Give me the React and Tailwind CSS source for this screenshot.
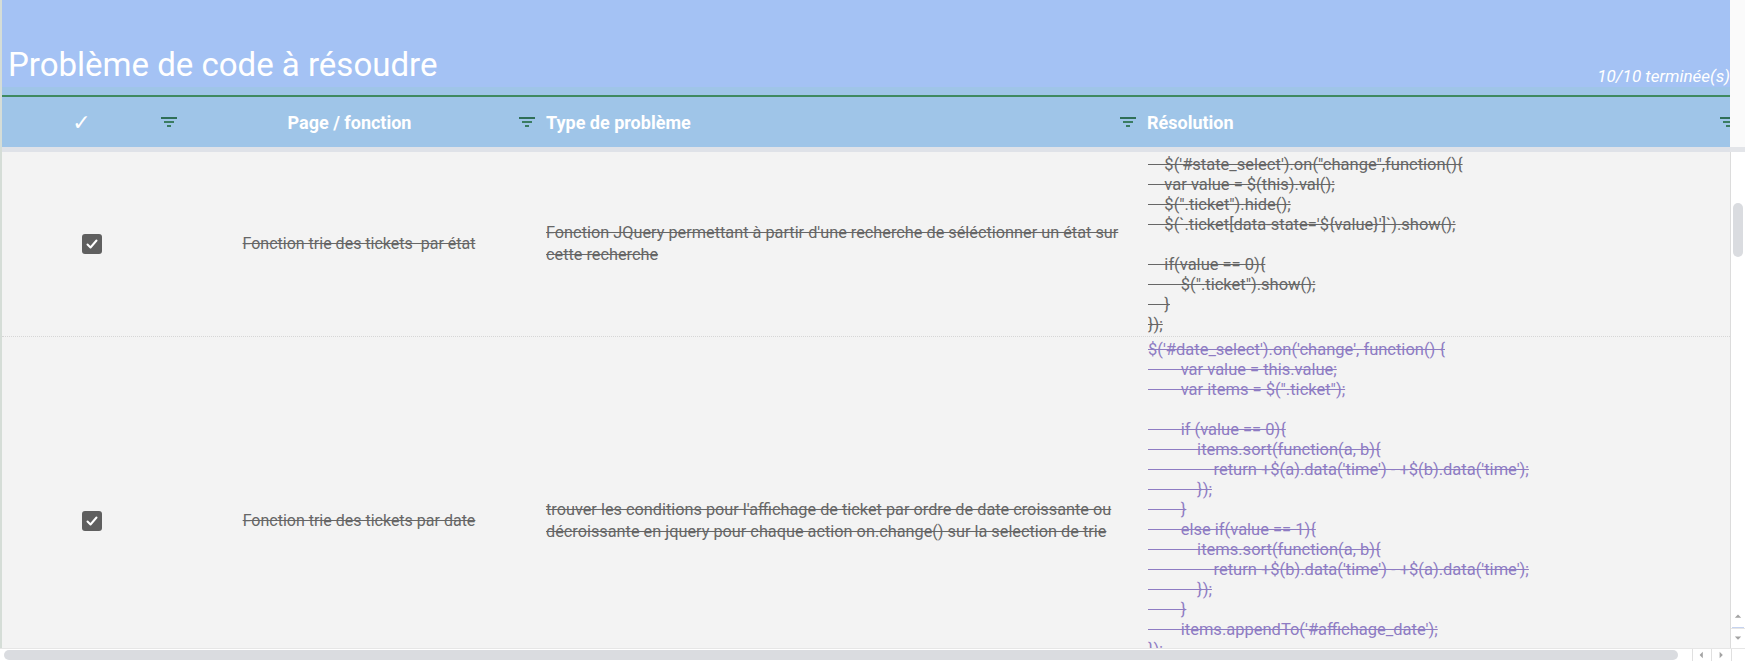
import React from 'react';

const ROWS = [
  {
    page: 'Fonction trie des tickets  par état',
    type: "Fonction JQuery permettant à partir d'une recherche de séléctionner un état sur cette recherche",
    color: 'text-[#666666]',
    pad: 'pb-[1px]',
    code: [
      "    $('#state_select').on(\"change\",function(){",
      '    var value = $(this).val();',
      '    $(".ticket").hide();',
      "    $(`.ticket[data-state='${value}']`).show();",
      '',
      '    if(value == 0){',
      '        $(".ticket").show();',
      '    }',
      '});',
    ],
  },
  {
    page: 'Fonction trie des tickets par date',
    type: "trouver les conditions pour l'affichage de ticket par ordre de date croissante ou décroissante en jquery pour chaque action on.change() sur la selection de trie",
    color: 'text-[#8e7cc3]',
    pad: 'pb-[44px]',
    code: [
      "$('#date_select').on('change', function() {",
      '        var value = this.value;',
      '        var items = $(".ticket");',
      '',
      '        if (value == 0){',
      '            items.sort(function(a, b){',
      "                return +$(a).data('time') - +$(b).data('time');",
      '            });',
      '        }',
      '        else if(value == 1){',
      '            items.sort(function(a, b){',
      "                return +$(b).data('time') - +$(a).data('time');",
      '            });',
      '        }',
      "        items.appendTo('#affichage_date');",
      '});',
    ],
  },
];

const COLS = 'grid grid-cols-[178px_358px_602px_600px]';

const FilterIcon = () => (
  <svg width="16" height="10" viewBox="0 0 16 10" className="shrink-0">
    <rect x="0" y="0" width="16" height="2" fill="#2f6f57" />
    <rect x="3" y="4" width="10" height="2" fill="#3a7c62" />
    <rect x="6" y="8" width="4" height="2" fill="#3a7c62" />
  </svg>
);

const CheckBox = () => (
  <div className="w-[20px] h-[20px] rounded-[3px] bg-[#5f5f5f] flex items-center justify-center">
    <svg width="14" height="14" viewBox="0 0 14 14">
      <polyline points="2.5,7.5 5.5,10.5 11.5,3.5" fill="none" stroke="#fff" strokeWidth="2" strokeLinecap="round" strokeLinejoin="round" />
    </svg>
  </div>
);

const Arrow = ({ dir }) => {
  const pts = {
    up: '1,6 5,2 9,6',
    down: '1,2 5,6 9,2',
    left: '6,1 2,5 6,9',
    right: '2,1 6,5 2,9',
  }[dir];
  return (
    <svg width="8" height="8" viewBox="0 0 8 8">
      <polygon points={pts} fill="#a3a3a3" transform="scale(0.8)" />
    </svg>
  );
};

export default function App() {
  return (
    <div className="w-[1745px] h-[661px] flex flex-col overflow-hidden bg-white font-['Roboto',sans-serif]">
      <div className="flex flex-1 min-h-0">
        {/* main sheet */}
        <div className="w-[1730px] flex flex-col min-h-0 overflow-hidden border-l-2 border-[#d5ddd7]">
          {/* title band */}
          <div className="h-[87px] shrink-0 bg-[#a4c2f4] flex items-end justify-between pl-[6px]">
            <h1 className="text-[33px] leading-[40px] text-white font-normal mb-[2px]">Problème de code à résoudre</h1>
            <span className="text-[17px] leading-[20px] italic text-white mb-[1px] whitespace-nowrap">10/10 terminée(s)</span>
          </div>
          <div className="h-[10px] shrink-0 bg-[#9fc5e8] border-b-2 border-[#3f8a60]" />

          {/* table header */}
          <div className="h-[50px] shrink-0 bg-[#9fc5e8] overflow-hidden">
            <div className={`${COLS} h-full text-white font-bold text-[18px]`}>
              <div className="flex items-center pr-[3px]">
                <span className="flex-1 text-center text-[22px] font-normal font-['DejaVu_Sans',sans-serif]">✓</span>
                <FilterIcon />
              </div>
              <div className="flex items-center pr-[3px]">
                <span className="flex-1 text-center">Page / fonction</span>
                <FilterIcon />
              </div>
              <div className="flex items-center pl-[8px] pr-[4px]">
                <span className="flex-1">Type de problème</span>
                <FilterIcon />
              </div>
              <div className="flex items-center pl-[7px] pr-[4px]">
                <span className="flex-1">Résolution</span>
                <FilterIcon />
              </div>
            </div>
          </div>
          <div className="h-[5px] shrink-0 bg-[#dfe2e8]" />

          {/* rows */}
          <div className="flex-1 min-h-0 overflow-hidden bg-[#f3f3f3]">
            {ROWS.map((row) => (
              <div key={row.page} className={`${COLS} border-b border-dotted border-[#d6d6d6]`}>
                <div className="flex items-center justify-center pl-[2px]">
                  <CheckBox />
                </div>
                <div className="flex items-center justify-center text-[16px] text-[#666666] line-through">
                  <span className="whitespace-pre">{row.page}</span>
                </div>
                <div className="flex items-center pl-[8px] pr-[6px] text-[16.3px] leading-[22px] text-[#666666] line-through">
                  <p>{row.type}</p>
                </div>
                <div className={`pl-[8px] pt-[3px] ${row.pad} text-[16.5px] leading-[20px] ${row.color}`}>
                  {row.code.map((line, i) => (
                    <div key={i} className="h-[20px] whitespace-pre line-through">{line}</div>
                  ))}
                </div>
              </div>
            ))}
          </div>
        </div>

        {/* vertical scrollbar */}
        <div className="w-[15px] flex flex-col">
          <div className="h-[147px] shrink-0 bg-[#fafafa]" />
          <div className="h-[5px] shrink-0 bg-[#e3e5e9]" />
          <div className="flex-1 flex flex-col border-l border-[#dcdcdc] bg-white">
            <div className="mt-[51px] mx-auto w-[10px] h-[54px] rounded-full bg-[#dadce0]" />
            <div className="mt-auto h-[20px] flex items-center justify-center">
              <Arrow dir="up" />
            </div>
            <div className="h-[1px] mx-[1px] bg-[#c6d3f0]" />
            <div className="h-[20px] flex items-center justify-center border-t border-[#e5e5e5]">
              <Arrow dir="down" />
            </div>
          </div>
        </div>
      </div>

      {/* horizontal scrollbar */}
      <div className="h-[13px] shrink-0 flex items-center border-t border-[#e6e6e6] bg-white">
        <div className="ml-[4px] w-[1674px] h-[10px] rounded-full bg-[#dadce0]" />
        <div className="ml-[14px] h-full w-[19px] flex items-center justify-center border-l border-[#e0e0e0]">
          <Arrow dir="left" />
        </div>
        <div className="h-full w-[20px] flex items-center justify-center border-l border-[#e0e0e0]">
          <Arrow dir="right" />
        </div>
        <div className="flex-1 h-full border-l border-[#e0e0e0]" />
      </div>
    </div>
  );
}
